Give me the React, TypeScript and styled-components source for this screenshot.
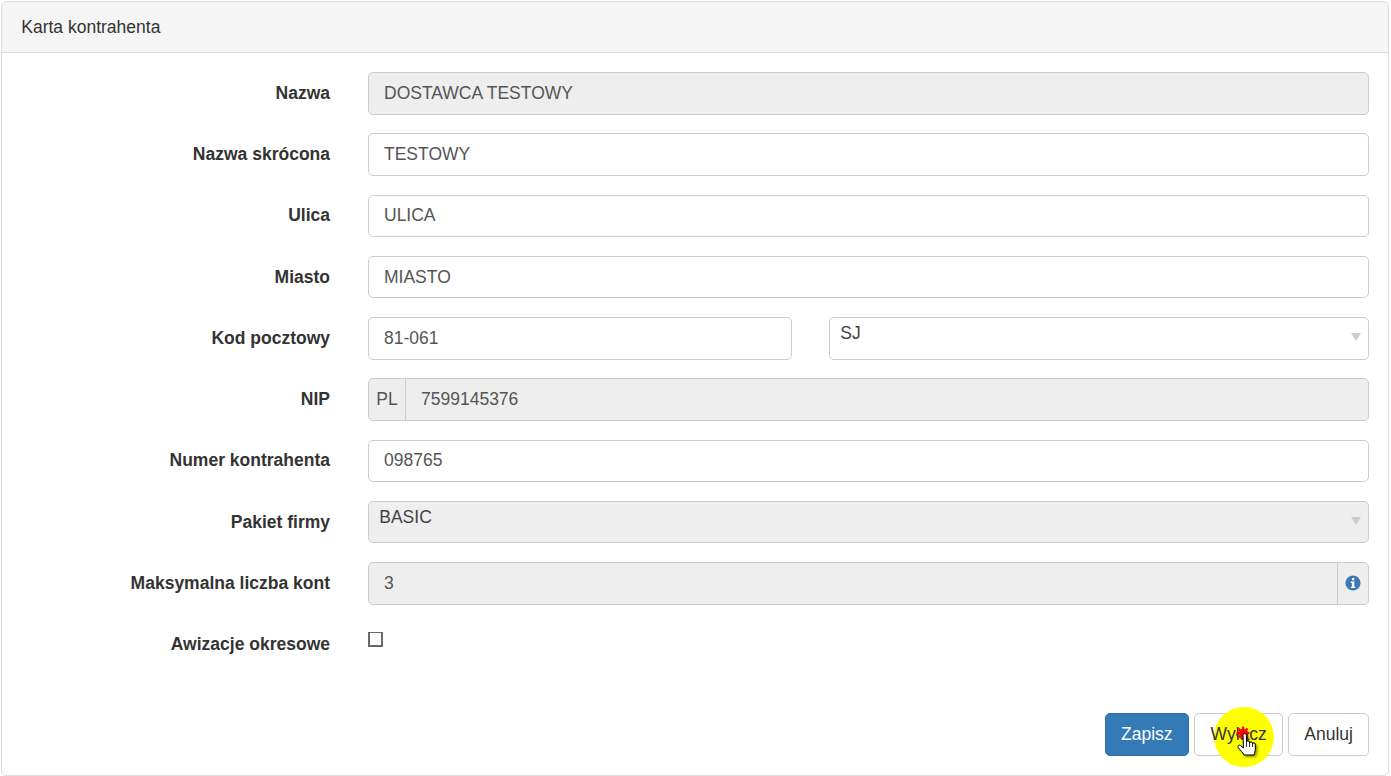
import React from "react"
import styled, { createGlobalStyle } from "styled-components"

const GlobalStyle = createGlobalStyle`
  html, body {
    margin: 0;
    padding: 0;
    background: #fff;
  }
  body {
    font-family: "Liberation Sans", Arial, sans-serif;
    font-size: 17.5px;
    line-height: 25px;
    color: #333;
    height: 776px;
    overflow: hidden;
  }
`

const Panel = styled.div`
  position: relative;
  box-sizing: border-box;
  width: 1388px;
  height: 775px;
  margin: 1px 0 0 1px;
  border: 1px solid #ddd;
  border-radius: 5px;
  display: flex;
  flex-direction: column;
`

const PanelHeading = styled.div`
  box-sizing: border-box;
  height: 51px;
  padding: 0 19.25px;
  display: flex;
  align-items: center;
  background: #f5f5f5;
  border-bottom: 1px solid #ddd;
  border-radius: 4px 4px 0 0;
`

const PanelBody = styled.div`
  flex: 1;
  padding: 19.1px 19px 0 0;
  display: flex;
  flex-direction: column;
  gap: 18.75px;
`

const Row = styled.div`
  display: grid;
  grid-template-columns: 328px 1fr;
  column-gap: 38px;
  align-items: start;
`

const Label = styled.label`
  font-weight: 700;
  text-align: right;
  line-height: 25px;
  padding-top: 8.75px;
`

const Field = styled.div<{ $disabled?: boolean }>`
  box-sizing: border-box;
  height: 42.5px;
  display: flex;
  align-items: center;
  padding: 0 15px;
  background: ${({ $disabled }) => ($disabled ? "#eee" : "#fff")};
  border: 1.25px solid #ccc;
  border-radius: 5px;
  color: #555;
`

const Split = styled.div`
  display: grid;
  grid-template-columns: 424px 1fr;
  column-gap: 37px;
`

const SelectBox = styled.div<{ $disabled?: boolean }>`
  position: relative;
  box-sizing: border-box;
  height: 42.5px;
  padding: 2.9px 10.25px 0;
  background: ${({ $disabled }) => ($disabled ? "#eee" : "#fff")};
  border: 1.25px solid #ccc;
  border-radius: 5px;
  color: #444;
`

const Caret = styled.span`
  position: absolute;
  right: 7px;
  top: 15px;
  width: 0;
  height: 0;
  border-left: 5px solid transparent;
  border-right: 5px solid transparent;
  border-top: 8px solid #ccc;
`

const Group = styled.div`
  box-sizing: border-box;
  height: 42.5px;
  display: flex;
  align-items: stretch;
  background: #eee;
  border: 1.25px solid #ccc;
  border-radius: 5px;
  color: #555;
`

const Addon = styled.div`
  display: flex;
  align-items: center;
  justify-content: center;
  flex: none;
  width: 36px;
  border-right: 1.25px solid #ccc;
`

const AddonRight = styled(Addon)`
  border-right: 0;
  border-left: 1.25px solid #ccc;
  width: 30.5px;
`

const GroupValue = styled.div`
  flex: 1;
  display: flex;
  align-items: center;
  padding: 0 15px;
`

const CheckBox = styled.span`
  display: block;
  box-sizing: border-box;
  width: 15px;
  height: 15px;
  margin-top: 9px;
  border: solid #6a6a6a;
  border-width: 1px 2px 2px 2px;
  background: #fff;
`

const Footer = styled.div`
  display: flex;
  justify-content: flex-end;
  gap: 5px;
  padding: 0 19px 18.75px 0;
`

const Button = styled.button<{ $primary?: boolean; $pad?: number }>`
  box-sizing: border-box;
  height: 43px;
  padding: 0 ${({ $pad }) => $pad ?? 15}px;
  font: inherit;
  color: ${({ $primary }) => ($primary ? "#fff" : "#333")};
  background: ${({ $primary }) => ($primary ? "#337ab7" : "#fff")};
  border: 1.25px solid ${({ $primary }) => ($primary ? "#2e6da4" : "#ccc")};
  border-radius: 5px;
`

/* text stays above the click highlight, the button border goes under it */
const ButtonLabel = styled.span`
  position: relative;
  z-index: 2;
`

const Highlight = styled.div`
  position: absolute;
  z-index: 1;
  left: 1214px;
  top: 707px;
  width: 59.5px;
  height: 60px;
  border-radius: 50%;
  background: #ffff00;
  pointer-events: none;
`

const CursorMark = styled.svg`
  position: absolute;
  z-index: 3;
  left: 1230px;
  top: 720px;
  width: 30px;
  height: 40px;
  pointer-events: none;
  overflow: visible;
`

const InfoIcon = () => (
  <svg width="16" height="16" viewBox="0 0 16 16">
    <circle cx="8" cy="8" r="7.6" fill="#3d7ab3" />
    <rect x="6.9" y="3" width="2.4" height="2.3" fill="#fff" />
    <path d="M5.9 6.6h3.4v5.2h1v1.3H5.9v-1.3h1V7.9h-1z" fill="#fff" />
  </svg>
)

const fields = [
  { label: "Nazwa skrócona", value: "TESTOWY" },
  { label: "Ulica", value: "ULICA" },
  { label: "Miasto", value: "MIASTO" },
]

const spokes = [0, 45, 90, 135]

export default function App() {
  return (
    <>
      <GlobalStyle />
      <Panel>
        <PanelHeading>Karta kontrahenta</PanelHeading>
        <PanelBody>
          <Row>
            <Label>Nazwa</Label>
            <Field $disabled>DOSTAWCA TESTOWY</Field>
          </Row>
          {fields.map((f) => (
            <Row key={f.label}>
              <Label>{f.label}</Label>
              <Field>{f.value}</Field>
            </Row>
          ))}
          <Row>
            <Label>Kod pocztowy</Label>
            <Split>
              <Field>81-061</Field>
              <SelectBox>
                SJ
                <Caret />
              </SelectBox>
            </Split>
          </Row>
          <Row>
            <Label>NIP</Label>
            <Group>
              <Addon>PL</Addon>
              <GroupValue>7599145376</GroupValue>
            </Group>
          </Row>
          <Row>
            <Label>Numer kontrahenta</Label>
            <Field>098765</Field>
          </Row>
          <Row>
            <Label>Pakiet firmy</Label>
            <SelectBox $disabled>
              BASIC
              <Caret />
            </SelectBox>
          </Row>
          <Row>
            <Label>Maksymalna liczba kont</Label>
            <Group>
              <GroupValue>3</GroupValue>
              <AddonRight>
                <InfoIcon />
              </AddonRight>
            </Group>
          </Row>
          <Row>
            <Label>Awizacje okresowe</Label>
            <CheckBox />
          </Row>
        </PanelBody>
        <Footer>
          <Button $primary $pad={15.5}>
            Zapisz
          </Button>
          <Button $pad={15.5}>
            <ButtonLabel>Wyłącz</ButtonLabel>
          </Button>
          <Button>Anuluj</Button>
        </Footer>
      </Panel>
      <Highlight />
      <CursorMark viewBox="0 0 30 40">
        <defs>
          <filter id="hand-shadow" x="-30%" y="-30%" width="170%" height="170%">
            <feDropShadow dx="1.5" dy="1.5" stdDeviation="1" floodColor="#000" floodOpacity="0.45" />
          </filter>
        </defs>
        <g stroke="#f00" strokeWidth="2.2">
          {spokes.map((a) => (
            <line key={a} x1="13" y1="6.5" x2="13" y2="19.5" transform={`rotate(${a} 13 13)`} />
          ))}
        </g>
        <circle cx="13" cy="13" r="4" fill="#f00" />
        <path
          d="M13 15.5c0-2.5 3.5-2.5 3.5 0v6.5c0-1.6 3-1.6 3 0v1c0-1.5 3-1.5 3 0v1c0-1.4 2.8-1.4 2.8 0v5c0 2.5-.8 3.8-1.2 6h-10c-1-2.4-3.8-4.5-5.8-7.5-1.3-2 1.1-3.2 2.5-1.7l2.7 2.2z"
          fill="#fff"
          stroke="#000"
          strokeWidth="1"
          strokeLinejoin="round"
          filter="url(#hand-shadow)"
        />
        <path d="M16.5 22v5M19.5 23v4M22.5 24v3" stroke="#000" strokeWidth="0.8" fill="none" />
      </CursorMark>
    </>
  )
}
